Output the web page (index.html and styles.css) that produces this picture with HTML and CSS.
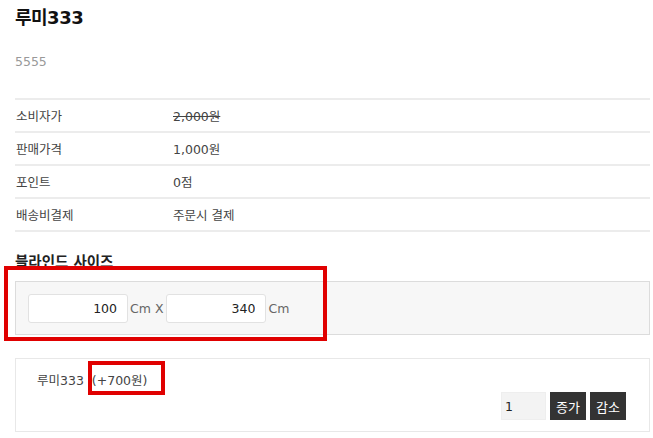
FILE: index.html
```html
<!DOCTYPE html>
<html lang="ko">
<head>
<meta charset="utf-8">
<link rel="stylesheet" href="styles.css">
</head>
<body>
<div class="page">
  <h1 class="title">루미333</h1>
  <p class="desc">5555</p>
  <table class="info">
    <tr><th>소비자가</th><td><del>2,000원</del></td></tr>
    <tr><th>판매가격</th><td>1,000원</td></tr>
    <tr><th>포인트</th><td>0점</td></tr>
    <tr><th>배송비결제</th><td>주문시 결제</td></tr>
  </table>
  <h2 class="opt-title">블라인드 사이즈</h2>
  <div class="size-wrap">
    <div class="size-box">
      <input class="size-input" type="text" value="100"><span class="unit">Cm X</span>
      <input class="size-input" type="text" value="340"><span class="unit">Cm</span>
    </div>
    <div class="mark mark-size"></div>
  </div>
  <div class="sel-box">
    <div class="sel-name">루미333<span class="price">(+700원)<span class="mark mark-price"></span></span></div>
    <div class="sel-qty">
      <input class="qty" type="text" value="1">
      <button class="btn">증가</button>
      <button class="btn">감소</button>
    </div>
  </div>
</div>
</body>
</html>
```
FILE: styles.css
```css
html, body {
  margin: 0;
  padding: 0;
  background: #fff;
}
body {
  font-family: "DejaVu Sans", "Noto Sans CJK KR", sans-serif;
  color: #333;
  font-size: 12.5px;
}
.page {
  width: 636px;
  padding: 0 0 0 15px;
}
.title {
  margin: 0;
  padding-top: 5px;
  font-size: 18px;
  line-height: 26px;
  font-weight: 700;
  color: #111;
  letter-spacing: -0.5px;
}
.desc {
  margin: 0;
  padding-top: 23px;
  line-height: 16px;
  font-size: 12.5px;
  color: #999;
  box-sizing: border-box;
  height: 67px;
}
.info {
  width: 635px;
  border-collapse: collapse;
}
.info th, .info td {
  border-top: 2px solid #ececec;
  border-bottom: 2px solid #ececec;
  height: 31px;
  padding: 0;
  text-align: left;
  font-weight: 400;
  font-size: 12.5px;
  color: #444;
  vertical-align: middle;
}
.info th {
  width: 157px;
  padding-left: 1px;
}
.info del {
  color: #444;
}
.opt-title {
  margin: 0;
  padding-top: 21px;
  font-size: 14.5px;
  line-height: 18px;
  font-weight: 700;
  color: #222;
}
.size-wrap {
  position: relative;
  margin-top: 10px;
}
.size-box {
  display: flex;
  align-items: center;
  height: 54px;
  background: #f7f7f7;
  border: 1px solid #dcdcdc;
  padding-left: 12px;
  box-sizing: border-box;
  width: 635px;
}
.size-input {
  width: 100px;
  height: 29px;
  box-sizing: border-box;
  border: 1px solid #e2e2e2;
  border-radius: 3px;
  background: #fff;
  text-align: right;
  padding: 0 10px;
  font-family: "DejaVu Sans", "Noto Sans CJK KR", sans-serif;
  font-size: 12.5px;
  color: #222;
  margin: 0;
}
.unit {
  font-size: 12.5px;
  color: #666;
  padding: 0 3px 0 2px;
}
.mark {
  position: absolute;
  border: 4px solid #e00000;
  box-sizing: border-box;
}
.mark-size {
  left: -11px;
  top: -15px;
  width: 323px;
  height: 75px;
}
.sel-box {
  margin-top: 23px;
  width: 635px;
  height: 74px;
  box-sizing: border-box;
  border: 1px solid #e8e8e8;
  display: flex;
  flex-direction: column;
}
.sel-name {
  padding: 14px 0 0 21px;
  font-size: 12.5px;
  color: #444;
  line-height: 16px;
}
.price {
  position: relative;
  padding-left: 8px;
}
.mark-price {
  left: 4px;
  top: -12px;
  width: 77px;
  height: 34px;
}
.sel-qty {
  display: flex;
  justify-content: flex-end;
  gap: 4px;
  padding: 3px 23px 0 0;
}
.qty {
  width: 45px;
  height: 28px;
  box-sizing: border-box;
  border: 1px solid #eee;
  background: #f3f3f3;
  margin: 0;
  padding: 0 3px;
  font-family: "DejaVu Sans", "Noto Sans CJK KR", sans-serif;
  font-size: 12.5px;
  color: #222;
}
.btn {
  width: 36px;
  height: 28px;
  background: #333;
  color: #fff;
  border: 0;
  margin: 0;
  padding: 0;
  font-family: "Noto Sans CJK KR", sans-serif;
  font-size: 13px;
}
```
